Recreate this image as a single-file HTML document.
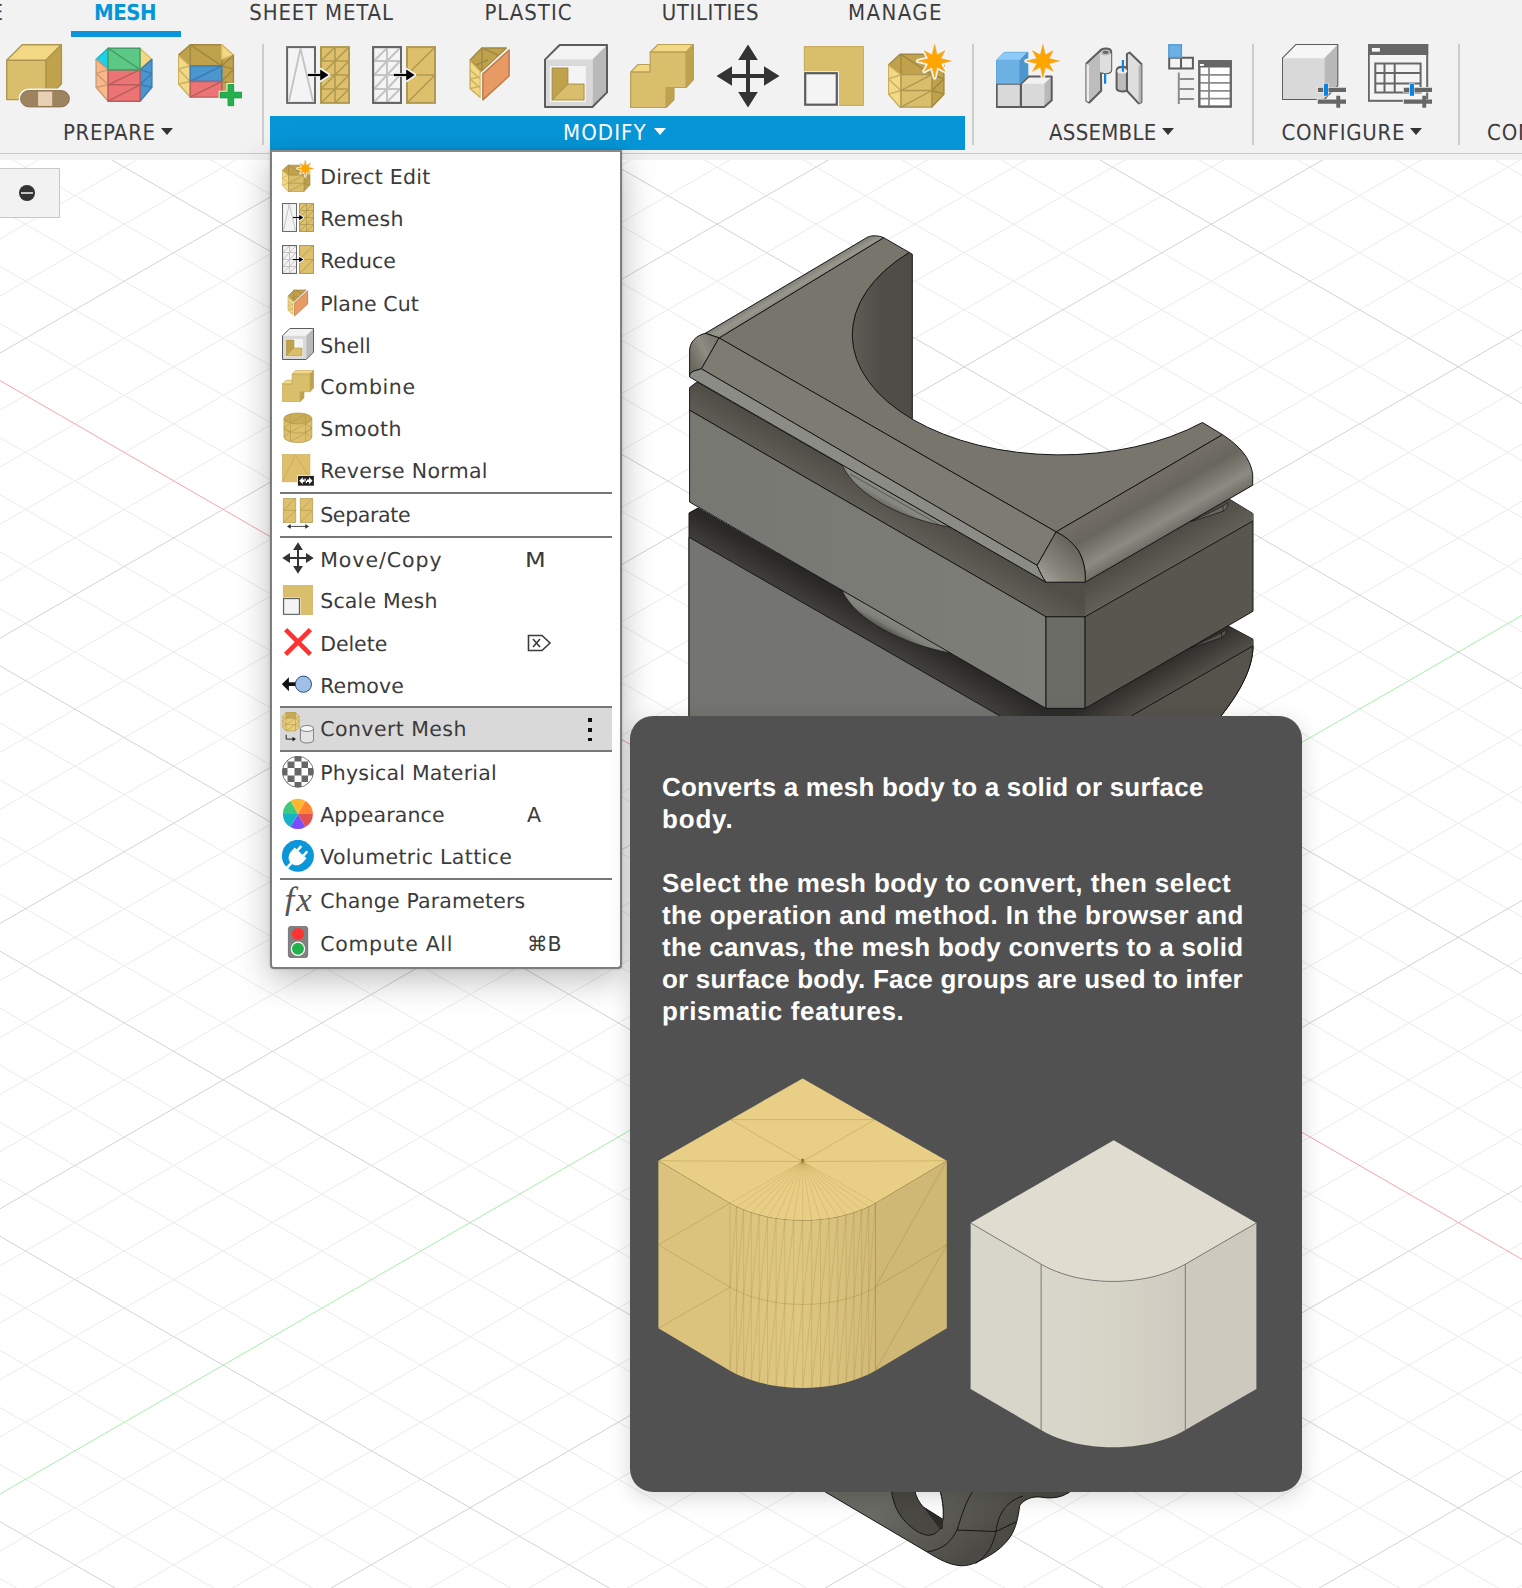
<!DOCTYPE html>
<html><head><meta charset="utf-8"><title>Mesh Modify menu</title>
<style>
html,body{margin:0;padding:0;}
body{text-rendering:geometricPrecision;width:1522px;height:1588px;overflow:hidden;position:relative;background:#fff;font-family:"Liberation Sans","DejaVu Sans",sans-serif;}
#canvas{position:absolute;left:0;top:0;}
.abs{position:absolute;}
#toolbar{opacity:.999;border-radius:0 0 1px 0;position:absolute;left:0;top:0;width:1522px;height:160px;background:#f2f2f2;}
#toolbar .line{position:absolute;left:0;top:152.5px;width:1522px;height:1.5px;background:#c9c9c9;}
.tab{position:absolute;top:-.2px;font:22px/26px "DejaVu Sans Condensed","DejaVu Sans","Liberation Sans",sans-serif;color:#3c3c3c;white-space:nowrap;}
.grp{position:absolute;top:121.4px;font:22px/26px "DejaVu Sans Condensed","DejaVu Sans","Liberation Sans",sans-serif;color:#3c3c3c;white-space:nowrap;}
.arr{position:absolute;top:128px;width:0;height:0;border-left:6.1px solid transparent;border-right:6.1px solid transparent;border-top:7.8px solid #333;}
.vsep{position:absolute;top:44px;width:2px;height:101px;background:#cdcdcd;}
.tico{position:absolute;top:44px;width:64px;height:64px;}
#menu{opacity:.999;position:absolute;left:270px;top:150px;width:348px;height:814.5px;background:#fff;border:2px solid #7d7d7d;border-top-color:#8c8886;border-radius:0 0 4px 4px;box-shadow:0 10px 34px rgba(0,0,0,.27),0 0 3px rgba(0,0,0,.18);}
.mi{position:absolute;left:47.8px;letter-spacing:.22px;font:20.5px/24px "DejaVu Sans","Liberation Sans",sans-serif;color:#3b3b3b;white-space:nowrap;}
.sc{position:absolute;left:255px;font:20.5px/24px "DejaVu Sans","Liberation Sans",sans-serif;color:#3b3b3b;white-space:nowrap;}
.msep{position:absolute;left:8px;width:332px;height:2px;background:#777;}
.mico{position:absolute;left:10px;width:32px;height:32px;}
#tooltip{opacity:.999;position:absolute;left:630px;top:716px;width:672px;height:776px;background:#515151;border-radius:23px;box-shadow:0 5px 22px rgba(0,0,0,.16);}
.tl{position:absolute;left:32px;font:bold 26px/32px "Liberation Sans",sans-serif;color:#fff;white-space:nowrap;letter-spacing:.17px;}
</style>

</head><body>
<svg width="0" height="0" style="position:absolute">
<defs>
<symbol id="i_repair" viewBox="0 0 64 64" overflow="visible">
<g stroke="#ad9650" stroke-width="1.4" stroke-linejoin="round">
<path d="M.7 16.2H40V55.6H.7Z" fill="#d9be6b"/>
<path d="M.7 16.2L16.2 .7H55.4L40 16.2Z" fill="#f3d985"/>
<path d="M40 16.2L55.4 .7V40L40 55.6Z" fill="#bfa24b"/>
</g>
<rect x="13.7" y="45.7" width="50.6" height="18.1" rx="9" fill="#9e835f" stroke="#f2f2f2" stroke-width="2.4"/>
<rect x="14.6" y="46.6" width="48.8" height="16.3" rx="8.2" fill="#9e835f" stroke="#8c7352" stroke-width="1"/>
<rect x="32.1" y="47.6" width="14.1" height="14.3" fill="#e8d0b5"/>
</symbol>
<symbol id="i_facegroups" viewBox="0 0 64 64" overflow="visible">
<g stroke-width="1.4" stroke-linejoin="round">
<path d="M16.1 4.2L4.1 15.4L16.1 25.7Z" fill="#1ad1e8" stroke="#17b5c9"/>
<path d="M48 4.2L59.9 15.4L48 25.7Z" fill="#f3d985" stroke="#d9be6b"/>
<path d="M4.1 15.4L16.1 25.7V57.2L4.1 43.3Z" fill="#f8b88a" stroke="#cf9a72"/>
<path d="M4.1 29.3L16.1 25.7M4.1 29.3L16.1 40.8M4.1 43.3L16.1 40.8" fill="none" stroke="#cf9a72"/>
<path d="M59.9 15.4L48 25.7V57.2L59.9 43.3Z" fill="#4a96cf" stroke="#3b7bb0"/>
<path d="M59.9 29.3L48 25.7M59.9 29.3L48 40.8M59.9 43.3L48 40.8" fill="none" stroke="#3b7bb0"/>
<path d="M16.1 25.7H48V57.2H16.1Z" fill="#ec7474" stroke="#b95c5c"/>
<path d="M16.1 40.8H48M16.1 40.8L48 25.7M16.1 57.2L48 40.8" fill="none" stroke="#b95c5c"/>
<path d="M16.1 4.2H48V25.7H16.1Z" fill="#5bc885" stroke="#459e68"/>
<path d="M16.1 4.2L48 25.7" fill="none" stroke="#459e68"/>
</g>
</symbol>
<symbol id="i_createfg" viewBox="0 0 64 64" overflow="visible">
<g stroke-width="1.4" stroke-linejoin="round">
<path d="M.4 11.2L12.2 .7H43.7L55.4 11.2L43.7 21.9H12.2Z" fill="#bfa24b" stroke="#a08840"/>
<path d="M12.2 .7V21.9M12.2 .7L43.7 21.9M43.7 .7V21.9" fill="none" stroke="#a08840"/>
<path d="M43.7 .7L55.4 11.2L43.7 15Z" fill="#f3d985" stroke="#d9be6b"/>
<path d="M.4 11.2L12.2 21.9V53.1L.4 40Z" fill="#f3d985" stroke="#c9b060"/>
<path d="M.4 25.2L12.2 21.9M.4 25.2L12.2 37.5M.4 40L12.2 37.5" fill="none" stroke="#c9b060"/>
<path d="M43.7 21.9L55.4 11.2V40L43.7 53.1Z" fill="#bfa24b" stroke="#a08840"/>
<path d="M55.4 25.2L43.7 21.9M55.4 25.2L43.7 37.5M55.4 40L43.7 37.5" fill="none" stroke="#a08840"/>
<path d="M12.2 21.9H43.7V37.5H12.2Z" fill="#4a96cf" stroke="#3b7bb0"/>
<path d="M12.2 37.5L43.7 21.9" fill="none" stroke="#3b7bb0"/>
<path d="M12.2 37.5H43.7V53.1H12.2Z" fill="#ec7474" stroke="#b95c5c"/>
<path d="M12.2 53.1L43.7 37.5" fill="none" stroke="#b95c5c"/>
</g>
<path d="M50 40.5H55.7V48.2H63.8V53.9H55.7V61.7H50V53.9H42.1V48.2H50Z" fill="#22b14c" stroke="#f2f2f2" stroke-width="3" paint-order="stroke"/>
<path d="M50 40.5H55.7V48.2H63.8V53.9H55.7V61.7H50V53.9H42.1V48.2H50Z" fill="#22b14c" stroke="#1c9a41" stroke-width=".8"/>
</symbol>
<symbol id="i_remesh" viewBox="0 0 64 64" overflow="visible">
<rect x="1.1" y="3.1" width="27.9" height="55.8" fill="#f4f4f4" stroke="#666" stroke-width="2"/>
<path d="M3 57L14.5 4.5L27 57" fill="none" stroke="#c4c4c4" stroke-width="1.9"/>
<rect x="35" y="3.1" width="28" height="55.8" fill="#dec06c" stroke="#b09a50" stroke-width="2"/>
<path d="M49 3V59M35 17H63M35 31H63M35 45H63M35 17L49 3M35 31L49 17M35 45L49 31M35 59L49 45M49 17L63 3M49 31L63 17M49 45L63 31M49 59L63 45" fill="none" stroke="#b09a50" stroke-width="1.6"/>
<path d="M21.9 31H36M34.2 25.4V36.6L42.6 31Z" stroke="#f2f2f2" stroke-width="3.4" fill="#f2f2f2" stroke-linejoin="round"/>
<path d="M21.9 31H36" stroke="#000" stroke-width="2.2"/><path d="M34.2 25.4V36.6L42.6 31Z" fill="#000"/>
</symbol>
<symbol id="i_reduce" viewBox="0 0 64 64" overflow="visible">
<rect x="1.1" y="3.1" width="27.9" height="55.8" fill="#f4f4f4" stroke="#666" stroke-width="2"/>
<path d="M15 4V58M2 17H28M2 31H28M2 45H28M2 17L15 4M2 31L15 17M2 45L15 31M2 58L15 45M15 17L28 4M15 31L28 17M15 45L28 31M15 58L28 45" fill="none" stroke="#c4c4c4" stroke-width="2"/>
<rect x="1.1" y="3.1" width="27.9" height="55.8" fill="none" stroke="#666" stroke-width="2"/>
<rect x="35" y="3.1" width="28" height="55.8" fill="#dec06c" stroke="#b09a50" stroke-width="2"/>
<path d="M35 31H63M35 31L63 3M35 59L63 31" fill="none" stroke="#b09a50" stroke-width="1.6"/>
<path d="M21.9 31H36M34.2 25.4V36.6L42.6 31Z" stroke="#f2f2f2" stroke-width="3.4" fill="#f2f2f2" stroke-linejoin="round"/>
<path d="M21.9 31H36" stroke="#000" stroke-width="2.2"/><path d="M34.2 25.4V36.6L42.6 31Z" fill="#000"/>
</symbol>
<symbol id="i_planecut" viewBox="0 0 64 64" overflow="visible">
<g stroke-linejoin="round" stroke-width="1.4">
<path d="M12.1 16.1L23.8 4H48.4L24.4 28Z" fill="#bfa24b" stroke="#a08840"/>
<path d="M24 4V27M24 4L40 11M18 21L30 16M24 27L36 16" fill="none" stroke="#a08840"/>
<path d="M12.1 16.7L22.4 27.3V53.5L12.1 44.6Z" fill="#f3d985" stroke="#c9b060"/>
<path d="M12.1 26L22.4 35M12.1 35L22.4 33M12.1 35L22.4 44M12.1 44.6L22.4 42" fill="none" stroke="#c9b060"/>
<path d="M24.4 29.5L51.7 4.7V32.3L24.4 57.2Z" fill="#e89a64" stroke="#f4f4f4" stroke-width="3.6"/>
<path d="M24.9 29.8L51.1 6V32L24.9 55.8Z" fill="#e89a64" stroke="#c07d4e" stroke-width="1.6"/>
</g>
</symbol>
<symbol id="i_shell" viewBox="0 0 64 64" overflow="visible">
<g stroke-linejoin="round">
<path d="M1 15.6L15.6 1H63V48.4L48.4 63H1Z" fill="#f3f3f3" stroke="none"/>
<path d="M48.4 15.6L63 1V48.4L48.4 63Z" fill="#b9b9b9"/>
<path d="M1 15.6H48.4V63H1Z" fill="#d9d9d9"/>
<path d="M5.9 21.9H41.9V58H5.9Z" fill="#f4f4f4"/>
<path d="M8.2 24.1H23.8V40.1L8.2 55.8Z" fill="#bfa24b" stroke="#a89045" stroke-width="1.2"/>
<path d="M8.2 55.8L23.8 40.1H40V55.8Z" fill="#d9be6b" stroke="#b09a50" stroke-width="1.2"/>
<path d="M1 15.6L15.6 1H63V48.4L48.4 63H1Z" fill="none" stroke="#5c5c5c" stroke-width="2"/>
</g>
</symbol>
<symbol id="i_combine" viewBox="0 0 64 64" overflow="visible">
<g stroke="#b8a055" stroke-width="1.2" stroke-linejoin="round">
<path d="M.6 28.2L8.1 20.5H20.2V28.2Z" fill="#f3d985"/>
<path d="M20.2 8.1L28 .5H63.5L56.1 8.1Z" fill="#f3d985"/>
<path d="M56.1 8.1L63.5 .5V35.7L56.1 43.5Z" fill="#bfa24b"/>
<path d="M36.1 43.5H44V55.8L36.1 63.5Z" fill="#bfa24b"/>
<path d="M.6 28.2H20.2V8.1H56.1V43.5H36.1V63.5H.6Z" fill="#d9be6b"/>
</g>
</symbol>
<symbol id="i_move" viewBox="0 0 64 64" overflow="visible">
<path d="M32 .5L41.8 16H34V30H48V22.2L63.5 32L48 41.8V34H34V48H41.8L32 63.6L22.2 48H30V34H16V41.8L.5 32L16 22.2V30H30V16H22.2Z" fill="#333"/>
</symbol>
<symbol id="i_scale" viewBox="0 0 64 64" overflow="visible">
<rect x="2.4" y="2.6" width="59" height="58.8" fill="#d9be6b" stroke="#c9ae5e" stroke-width="1.2"/>
<path d="M32 2.6L61.4 32M2.4 2.6L32 32" stroke="#cdb262" stroke-width="1" fill="none" opacity="0"/>
<rect x="1.2" y="27.2" width="35.8" height="35.6" fill="#f4f4f4"/>
<rect x="3.2" y="29.2" width="31.6" height="31.5" fill="#f4f4f4" stroke="#5c5c5c" stroke-width="2.2"/>
</symbol>
<symbol id="i_star" viewBox="-17 -17 34 34" overflow="visible">
<path id="starp" d="M0.0 -16.6L2.5 -6.1L10.3 -10.3L6.1 -2.5L16.6 0.0L6.1 2.5L10.3 10.3L2.5 6.1L0.0 16.6L-2.5 6.1L-10.3 10.3L-6.1 2.5L-16.6 0.0L-6.1 -2.5L-10.3 -10.3L-2.5 -6.1Z"/>
</symbol>
<symbol id="i_directedit" viewBox="0 0 64 64" overflow="visible">
<g stroke-linejoin="round" stroke-width="1.4">
<path d="M.4 21.1L12 10.3H43.8L55.9 21.1L43.8 30.6H13Z" fill="#bfa24b" stroke="#a08840"/>
<path d="M13 10.3V30.6M13 10.3L43.8 30.6" fill="none" stroke="#a08840"/>
<path d="M.4 21.1L13 30.6V63.1L12 63.3L.4 50.2Z" fill="#f3d985" stroke="#c9b060"/>
<path d="M.4 35L13 30.6M.4 35L13 46.5M.4 50.2L13 46.5" fill="none" stroke="#c9b060"/>
<path d="M43.8 30.6L55.9 21.1V50.2L43.8 63.1Z" fill="#bfa24b" stroke="#a08840"/>
<path d="M55.9 35L43.8 30.6M55.9 35L43.8 46.5M55.9 50.2L43.8 46.5" fill="none" stroke="#a08840"/>
<path d="M13 30.6H43.8V63.1H13Z" fill="#d9be6b" stroke="#ad9650"/>
<path d="M13 46.5H43.8M13 46.5L43.8 30.6M13 63.1L43.8 46.5" fill="none" stroke="#ad9650"/>
</g>
<g transform="translate(46.6 17)"><use href="#starp" fill="#f4f4f4" stroke="#f4f4f4" stroke-width="4" stroke-linejoin="round"/><use href="#starp" fill="#ffa500" stroke="#f0a020" stroke-width=".6"/></g>
</symbol>
<symbol id="i_newcomp" viewBox="0 0 64 64" overflow="visible">
<g stroke-linejoin="round">
<path d="M.7 39.8H24.8V63H.7Z" fill="#d9d9d9" stroke="#5c5c5c" stroke-width="2"/>
<path d="M25 39.8L32.6 32.6H55.7L48.2 39.8Z" fill="#f1f1f1"/>
<path d="M48.2 39.8L55.7 32.6V56.3L48.2 63Z" fill="#b9b9b9"/>
<path d="M25 39.8H48.2V63H25Z" fill="#d9d9d9"/>
<path d="M25 39.8L32.6 32.6H55.7V56.3L48.2 63H25Z" fill="none" stroke="#5c5c5c" stroke-width="2"/>
<path d="M.4 16.3H24.2V39.6H.4Z" fill="#6cb0e4" stroke="#5a9fd6" stroke-width="1"/>
<path d="M.4 16.3L8.2 8.3H31.8L24.2 16.3Z" fill="#8ecaf8" stroke="#6cb0e4" stroke-width="1"/>
<path d="M24.2 16.3L31.8 8.3V32L24.2 39.6Z" fill="#4a96cf" stroke="#4a8fc4" stroke-width="1"/>
</g>
<g transform="translate(46.9 17)"><use href="#starp" fill="#f4f4f4" stroke="#f4f4f4" stroke-width="4" stroke-linejoin="round"/><use href="#starp" fill="#ffa500" stroke="#f0a020" stroke-width=".6"/></g>
</symbol>
<symbol id="i_joint" viewBox="0 0 64 64" overflow="visible">
<g stroke="#5c5c5c" stroke-width="2" stroke-linejoin="round">
<path d="M4.4 19.5L18 6.8C19 5.4 21 4.6 23.5 4.6C27 4.6 29.2 6 29.2 8V26C29.2 28 27 29.2 23.5 29.2C21.5 29.2 19.8 28.8 19 28L19.2 46.8L7.4 58.5L4.4 56.9Z" fill="#bdbdbd"/>
<path d="M18 8V28C19 28.8 21 29.2 23.5 29.2C27 29.2 29.2 28 29.2 26V8C29.2 10 27 11.4 23.5 11.4C20 11.4 18 10 18 8Z" fill="#dedede" stroke="none"/>
<path d="M4.4 19.5L7 21.5V58L4.4 56.9Z" fill="#ececec" stroke="none"/>
<ellipse cx="23.6" cy="8.3" rx="3" ry="1.6" fill="#666" stroke="none"/>
<path d="M44.9 10L47.6 8.5L59.4 20V58L56.6 59.4L44.9 46.8Z" fill="#dedede"/>
<path d="M56.6 22V59.4L59.4 58V20Z" fill="#b5b5b5" stroke="none"/>
<path d="M34.6 27C34.6 24.5 37 22.8 40.5 22.8C43 22.8 44.9 23.6 44.9 24.5V46.8C43.5 47.2 42 47.4 40.5 47.4C37 47.4 34.6 46 34.6 44Z" fill="#bdbdbd"/>
<ellipse cx="40.2" cy="27" rx="5" ry="2.6" fill="#ececec" stroke="none"/>
</g>
<path d="M23.1 30.1V39.8M40.9 16V27.8" stroke="#0a84e0" stroke-width="2.2" fill="none"/>
</symbol>
<symbol id="i_bom" viewBox="0 0 64 64" overflow="visible">
<path d="M1.2 13.8H24.9V24.6H1.2ZM13 13.8V24.6" fill="#f4f4f4" stroke="#5c5c5c" stroke-width="2"/>
<rect x=".8" y=".8" width="12.6" height="12.6" fill="#6cb0e4" stroke="#4f9bd4" stroke-width="1.4"/>
<path d="M10.8 28.4V60M10.8 34.9H26M10.8 44.9H26M10.8 54.9H26" fill="none" stroke="#8c8c8c" stroke-width="2"/>
<rect x="31.3" y="17.3" width="31.5" height="45.3" fill="#fff" stroke="#666" stroke-width="2"/>
<rect x="30.3" y="16.3" width="33.5" height="7.2" fill="#666"/>
<path d="M41 23V63M31 30.8H63M31 38.8H63M31 46.8H63M31 54.6H63" fill="none" stroke="#8c8c8c" stroke-width="1.8"/>
<rect x="31.3" y="17.3" width="31.5" height="45.3" fill="none" stroke="#666" stroke-width="2"/>
<rect x="31.9" y="20" width="4" height="1.9" fill="#fff"/>
</symbol>
<symbol id="i_sliders" viewBox="0 0 64 64" overflow="visible">
<path d="M34.8 43H65V48.6H34.8ZM34.8 54.9H65V60.5H34.8Z" fill="#f2f2f2"/>
<path d="M35.8 43.7H64V47.9H35.8ZM35.8 55.6H64V59.8H35.8ZM54.3 51.8H58.2V63.8H54.3Z" fill="#666"/>
<rect x="41.2" y="39.2" width="5.3" height="13.1" fill="#f2f2f2"/>
<rect x="41.9" y="39.7" width="4.1" height="12.1" fill="#0a84e0"/>
</symbol>
<symbol id="i_cfgcube" viewBox="0 0 64 64" overflow="visible">
<g stroke-linejoin="round">
<path d="M.4 14.2L14 .4H55.8L42.3 14.2Z" fill="#f6f6f6"/>
<path d="M42.3 14.2L55.8 .4V41.6L42.3 55.5Z" fill="#b9b9b9"/>
<path d="M.4 14.2H42.3V55.5H.4Z" fill="#d9d9d9"/>
<path d="M.4 14.2L14 .4H55.8V41.6L42.3 55.5H.4Z" fill="none" stroke="#5c5c5c" stroke-width="1.1"/>
</g>
<use href="#i_sliders" width="64" height="64"/>
</symbol>
<symbol id="i_cfgtable" viewBox="0 0 64 64" overflow="visible">
<rect x=".8" y="1" width="58.4" height="55.8" fill="#f4f4f4" stroke="#666" stroke-width="2"/>
<rect x="-.2" y="0" width="60.4" height="11" fill="#666"/>
<rect x="3.9" y="4" width="8" height="3.7" fill="#f4f4f4"/>
<path d="M7.3 19.4H52.6V48.6H7.3ZM16.5 19V49M26.7 19V49M7 29H53M7 39.4H53" fill="none" stroke="#666" stroke-width="2"/>
<use href="#i_sliders" width="64" height="64"/>
</symbol>
<symbol id="i_smooth" viewBox="0 0 64 64" overflow="visible">
<path d="M4 13V50A27.8 11 0 0 0 59.6 50V13Z" fill="#dec06c" stroke="#b09a50" stroke-width="1.6"/>
<ellipse cx="31.8" cy="13" rx="27.8" ry="11" fill="#c9ac55" stroke="#b09a50" stroke-width="1.6"/>
<path d="M4 31A27.8 11 0 0 0 59.6 31M17 22.6V59M47 22.6V59M17 4V22.6M47 4V22.6M17 22.6L47 4M4 31L17 22.6M4 50L17 40M17 40L47 24M17 59L47 42M47 24L59.6 13M47 42L59.6 31M47 24L59.6 31M47 42L59.6 50M4 13L17 22.6M4 31L17 40" fill="none" stroke="#b09a50" stroke-width="1.3"/>
</symbol>
<symbol id="i_reverse" viewBox="0 0 64 64" overflow="visible">
<rect x=".8" y="1" width="55" height="54.6" fill="#dec06c" stroke="#c9ae5e" stroke-width="1.4"/>
<path d="M1 55L27 2L52 42" fill="none" stroke="#c0a555" stroke-width="1.3"/>
<rect x="30.4" y="42.4" width="34.6" height="22.4" fill="#fff"/>
<rect x="31.8" y="43.8" width="32" height="19.6" fill="#222"/>
<path d="M34.5 53.6L41.5 46.5V51H54V46.5L61 53.6L54 60.6V56.2H41.5V60.6Z" fill="#fff"/>
<path d="M45 49H50V58H45Z" fill="#222"/><path d="M45 49H47.5V53.5H45ZM47.5 53.5H50V58H47.5Z" fill="#fff"/>
</symbol>
<symbol id="i_separate" viewBox="0 0 64 64" overflow="visible">
<path d="M2.8 .6H27.4V49H2.8ZM36.6 .6H61.2V49H36.6Z" fill="#dec06c" stroke="#b09a50" stroke-width="1.5"/>
<path d="M2.8 24.6H27.4M36.6 24.6H61.2M2.8 24.6L27.4 .6M2.8 49L27.4 24.6M36.6 24.6L61.2 .6M36.6 49L61.2 24.6" fill="none" stroke="#b09a50" stroke-width="1.3"/>
<path d="M12 56.8H52" stroke="#333" stroke-width="1.8"/><path d="M10 56.8L17.5 52V61.6ZM54 56.8L46.5 52V61.6Z" fill="#333"/>
</symbol>
<symbol id="i_delete" viewBox="0 0 64 64" overflow="visible">
<path d="M7.2 7.2L56.8 56.8M56.8 7.2L7.2 56.8" stroke="#ff3232" stroke-width="9.2" fill="none"/>
</symbol>
<symbol id="i_remove" viewBox="0 0 64 64" overflow="visible">
<path d="M-.2 32.4L13.8 18.4V28.7H28V36.1H13.8V46.4Z" fill="#111"/>
<circle cx="42.8" cy="32.4" r="16.2" fill="#9fbfe6" stroke="#1c3a6e" stroke-width="1.8"/>
</symbol>
<symbol id="i_convert" viewBox="0 0 64 64" overflow="visible">
<g stroke-width="1.2" stroke-linejoin="round">
<path d="M.6 9L8 .6H27L34.4 9V30L27 37.8H8L.6 30Z" fill="#e8ce7c" stroke="#b09a50"/>
<path d="M8 .6H27V12.5H8Z" fill="#c9ac55" stroke="#b09a50"/>
<path d="M8 12.5V37.8M27 12.5V37.8M8 25H27M8 12.5L27 .6M8 25L27 12.5M8 37.8L27 25M.6 9L8 12.5M.6 19L8 25M.6 30L8 25M34.4 9L27 12.5M34.4 19L27 25M34.4 30L27 25M.6 19L8 12.5M34.4 19L27 12.5" fill="none" stroke="#b09a50"/>
</g>
<path d="M36.8 33V56A13.2 6 0 0 0 63.2 56V33Z" fill="#e4e4e4" stroke="#555" stroke-width="1.4"/>
<ellipse cx="50" cy="33" rx="13.2" ry="6" fill="#f6f6f6" stroke="#555" stroke-width="1.4"/>
<path d="M8.4 45.6V54.2H24" fill="none" stroke="#222" stroke-width="2"/><path d="M21 49.6L28 54.2L21 58.8Z" fill="#222"/>
</symbol>
<symbol id="i_physmat" viewBox="0 0 64 64" overflow="visible">
<clipPath id="cpm"><circle cx="31.8" cy="31.6" r="31"/></clipPath>
<circle cx="31.8" cy="31.6" r="31" fill="#fff"/>
<g clip-path="url(#cpm)" fill="#666">
<path d="M25 -1H39V11H25ZM11 11H25V24H11ZM39 11H52V24H39ZM-1 24H11V39H-1ZM25 24H39V39H25ZM52 24H64V39H52ZM11 39H25V52H11ZM39 39H52V52H39ZM25 52H39V64H25ZM0 5L11 11V0ZM52 0V11L64 5ZM0 58L11 52V64ZM52 52V64H64Z"/>
</g>
<circle cx="31.8" cy="31.6" r="31" fill="none" stroke="#5a5a5a" stroke-width="1.6"/>
</symbol>
<symbol id="i_appearance" viewBox="0 0 64 64" overflow="visible">
<g transform="translate(31.8 31.8)">
<path d="M0 0L-15 -25.98A30 30 0 0 1 15 -25.98Z" fill="#fdb731"/>
<path d="M0 0L15 -25.98A30 30 0 0 1 30 0Z" fill="#ff8533"/>
<path d="M0 0L30 0A30 30 0 0 1 15 25.98Z" fill="#e0524f"/>
<path d="M0 0L15 25.98A30 30 0 0 1 -15 25.98Z" fill="#7c4dff"/>
<path d="M0 0L-15 25.98A30 30 0 0 1 -30 0Z" fill="#14b4c6"/>
<path d="M0 0L-30 0A30 30 0 0 1 -15 -25.98Z" fill="#3fc97d"/>
</g>
</symbol>
<symbol id="i_lattice" viewBox="0 0 64 64" overflow="visible">
<circle cx="31.8" cy="31.6" r="32" fill="#0a96d8"/>
<g transform="translate(31.8 31.6) rotate(42)" fill="#fff">
<path d="M-16 -8H16V2C16 13 9 20 0 20C-9 20 -16 13 -16 2Z"/>
<rect x="-10.5" y="-19" width="5" height="13"/>
<rect x="5.5" y="-19" width="5" height="13"/>
<rect x="-2.6" y="18" width="5.2" height="16"/>
</g>
</symbol>
<symbol id="i_fx" viewBox="0 0 64 64" overflow="visible">
<text x="5" y="54.2" font-family="'Liberation Serif','DejaVu Serif',serif" font-style="italic" font-size="70" fill="#555" letter-spacing="4">fx</text>
</symbol>
<symbol id="i_compute" viewBox="0 0 64 64" overflow="visible">
<rect x="12.8" y=".4" width="38.6" height="63.2" rx="6" fill="#818181" stroke="#666" stroke-width="1.6"/>
<circle cx="31.9" cy="16.2" r="12.2" fill="#ff3333"/>
<circle cx="31.9" cy="45.6" r="14.4" fill="#fff"/>
<circle cx="31.9" cy="45.6" r="12" fill="#22b14c"/>
</symbol>
</defs>
</svg>

<svg id="canvas" width="1522" height="1588" viewBox="0 0 1522 1588">
<rect width="1522" height="1588" fill="#fff"/>
<path d="M0 181.9L1522 -696.9M0 238.9L1522 -639.8M0 296.0L1522 -582.8M0 -703.4L1522 175.4M0 410.0L1522 -468.7M0 -646.3L1522 232.4M0 467.1L1522 -411.6M0 -589.2L1522 289.5M0 524.2L1522 -354.6M0 -532.2L1522 346.5M0 581.2L1522 -297.5M0 -418.1L1522 460.6M0 695.3L1522 -183.4M0 -361.0L1522 517.7M0 752.4L1522 -126.4M0 -304.0L1522 574.7M0 809.4L1522 -69.3M0 -246.9L1522 631.8M0 866.5L1522 -12.3M0 -132.8L1522 745.9M0 980.6L1522 101.8M0 -75.8L1522 802.9M0 1037.6L1522 158.9M0 -18.7L1522 860.0M0 1094.7L1522 215.9M0 38.3L1522 917.0M0 1151.7L1522 273.0M0 152.4L1522 1031.1M0 1265.8L1522 387.1M0 209.5L1522 1088.2M0 1322.8L1522 444.1M0 266.5L1522 1145.2M0 1379.9L1522 501.2M0 323.6L1522 1202.3M0 1437.0L1522 558.2M0 437.7L1522 1316.4M0 1551.0L1522 672.3M0 494.7L1522 1373.4M0 1608.1L1522 729.4M0 551.8L1522 1430.5M0 1665.2L1522 786.4M0 608.8L1522 1487.5M0 1722.2L1522 843.5M0 722.9L1522 1601.6M0 1836.3L1522 957.6M0 780.0L1522 1658.7M0 1893.3L1522 1014.6M0 837.0L1522 1715.7M0 1950.4L1522 1071.7M0 894.0L1522 1772.8M0 2007.4L1522 1128.7M0 1008.1L1522 1886.9M0 2121.6L1522 1242.8M0 1065.2L1522 1943.9M0 2178.6L1522 1299.9M0 1122.2L1522 2001.0M0 2235.7L1522 1356.9M0 1179.3L1522 2058.0M0 2292.7L1522 1414.0M0 1293.4L1522 2172.1M0 2406.8L1522 1528.1M0 1350.4L1522 2229.2M0 2463.8L1522 1585.1M0 1407.5L1522 2286.2M0 1464.6L1522 2343.3M0 1578.7L1522 2457.4" stroke="#ebebeb" stroke-width="1" fill="none"/><path d="M0 353.0L1522 -525.7M0 -475.1L1522 403.6M0 638.2L1522 -240.5M0 -189.9L1522 688.8M0 923.5L1522 44.8M0 95.4L1522 974.1M0 1208.8L1522 330.0M0 665.9L1522 1544.6M0 1779.2L1522 900.5M0 951.1L1522 1829.8M0 2064.5L1522 1185.8M0 1236.3L1522 2115.1M0 2349.8L1522 1471.0M0 1521.6L1522 2400.3" stroke="#d2d2d2" stroke-width="1" fill="none"/><path d="M0 380.6L1522 1259.3" stroke="#f4a6a6" stroke-width="1" fill="none"/><path d="M0 1494.0L1522 615.3" stroke="#a6f0a6" stroke-width="1" fill="none"/>
<defs>
<linearGradient id="gFilL" gradientUnits="userSpaceOnUse" x1="790" y1="280" x2="800" y2="297"><stop offset="0" stop-color="#77756c"/><stop offset=".45" stop-color="#98978e"/><stop offset="1" stop-color="#79766d"/></linearGradient>
<linearGradient id="gFilR" gradientUnits="userSpaceOnUse" x1="1140" y1="483" x2="1170" y2="535"><stop offset="0" stop-color="#736f66"/><stop offset=".35" stop-color="#69665d"/><stop offset=".75" stop-color="#8b8b84"/><stop offset="1" stop-color="#6d6a62"/></linearGradient>
<linearGradient id="gWall" gradientUnits="userSpaceOnUse" x1="852" y1="0" x2="912" y2="0"><stop offset="0" stop-color="#5f5d55"/><stop offset=".45" stop-color="#504e48"/><stop offset="1" stop-color="#4e4c46"/></linearGradient>
<linearGradient id="gMidTop" gradientUnits="userSpaceOnUse" x1="860" y1="478" x2="842" y2="510"><stop offset="0" stop-color="#514e48"/><stop offset="1" stop-color="#66635b"/></linearGradient>
<linearGradient id="gMidTopR" gradientUnits="userSpaceOnUse" x1="1160" y1="540" x2="1176" y2="568"><stop offset="0" stop-color="#4f4c46"/><stop offset="1" stop-color="#65625a"/></linearGradient>
<linearGradient id="gBand" gradientUnits="userSpaceOnUse" x1="850" y1="600" x2="836" y2="625"><stop offset="0" stop-color="#2b2927"/><stop offset="1" stop-color="#44423e"/></linearGradient>
<linearGradient id="gLowTopR" gradientUnits="userSpaceOnUse" x1="1150" y1="670" x2="1166" y2="698"><stop offset="0" stop-color="#2f2d2a"/><stop offset="1" stop-color="#55524b"/></linearGradient>
<linearGradient id="gCone" gradientUnits="userSpaceOnUse" x1="1047" y1="582" x2="1078" y2="548"><stop offset="0" stop-color="#a09e94"/><stop offset=".35" stop-color="#87857b"/><stop offset="1" stop-color="#66635b"/></linearGradient>
<linearGradient id="gConeL" gradientUnits="userSpaceOnUse" x1="690" y1="360" x2="720" y2="345"><stop offset="0" stop-color="#6b685f"/><stop offset=".5" stop-color="#8d8b82"/><stop offset="1" stop-color="#79766d"/></linearGradient>
<linearGradient id="gFront" gradientUnits="userSpaceOnUse" x1="689" y1="0" x2="1046" y2="0"><stop offset="0" stop-color="#777872"/><stop offset="1" stop-color="#7d7e78"/></linearGradient>
<linearGradient id="gRing" gradientUnits="userSpaceOnUse" x1="900" y1="1492" x2="960" y2="1566"><stop offset="0" stop-color="#6a6b65"/><stop offset="1" stop-color="#4c4a44"/></linearGradient>
<linearGradient id="gLens1" gradientUnits="userSpaceOnUse" x1="900" y1="494" x2="890" y2="512"><stop offset="0" stop-color="#8c8d87"/><stop offset=".55" stop-color="#85867f"/><stop offset="1" stop-color="#5d5b54"/></linearGradient>
<linearGradient id="gLens2" gradientUnits="userSpaceOnUse" x1="900" y1="620" x2="890" y2="638"><stop offset="0" stop-color="#8e8f89"/><stop offset=".5" stop-color="#7d7e78"/><stop offset="1" stop-color="#3a3835"/></linearGradient>
</defs>
<g stroke="#161616" stroke-width="1" stroke-linejoin="round">
<!-- lower body -->
<path d="M689 513L698 508L1046 708.4H1085.1L1228 625.8L1253 639.2V646C1253 668 1240 692 1221 716L1200 760H689Z" fill="url(#gBand)"/>
<path d="M1085.1 708.4L1228 625.8L1253 639.2V645.9L1131.9 715.6L1100 760H1046V708.4Z" fill="url(#gLowTopR)" stroke="none"/>
<path d="M1253 645.9L1131.9 715.6V760H1200L1221 716C1240 692 1253 668 1253 645.9Z" fill="#56534c"/>
<path d="M689 537.2L1000 716L1080 762H689Z" fill="#747570"/>
<!-- mid body -->
<path d="M689.6 387.6L697 382L1046 582.2H1085.1L1229.5 499.2L1253 513.6V520.9L1085.1 616.8H1046L689.6 410.2Z" fill="url(#gMidTop)"/>
<path d="M1085.1 582.2L1229.5 499.2L1253 513.6V520.9L1085.1 616.8Z" fill="url(#gMidTopR)" stroke="none"/><path d="M1191 521.5C1205 515 1218 509 1223 506L1227.8 503C1228 507 1226 510 1222 511.5C1212 515 1200 519 1191 521.5ZM1223 506V511" fill="#6a675f" stroke-width=".7"/><path transform="translate(-1.5 126.6)" d="M1191 521.5C1205 515 1218 509 1223 506L1227.8 503C1228 507 1226 510 1222 511.5C1212 515 1200 519 1191 521.5ZM1223 506V511" fill="#55524b" stroke-width=".7"/>
<path d="M689.6 410.2L1046 616.8V708.4L689.6 502Z" fill="url(#gFront)"/>
<path d="M1046 616.8H1085.1V708.4H1046Z" fill="#6c6c66"/>
<path d="M1085.1 616.8L1253 520.9V611.3L1085.1 708.4Z" fill="#59564f"/>
<!-- lens shadows -->
<path d="M842.1 464.8C856 496 903 519 950.4 527.2Z" fill="url(#gLens1)" stroke-width=".7"/><path d="M850 474L945 528" stroke-width=".6" fill="none" stroke="#3a3835"/>
<path d="M842.1 590.5C856 621 903 644 950.4 653Z" fill="url(#gLens2)" stroke-width=".7"/>
<!-- top piece -->
<path d="M909.2 252.4L912.3 254.2V419.5A208 120 0 0 1 909.2 252.4Z" fill="url(#gWall)"/>
<path d="M883.7 237.7L909.2 252.4A208 120 0 0 0 1202.4 422.5L1203.5 423.1L1222.5 434.7L1056.1 531.9L719.1 337.9Z" fill="#78756d"/>
<path d="M865 238.7C868 236.5 871 235.8 873.9 235.8C878 235.8 881 236.5 883.7 237.7L719.1 337.9L705.3 333.3Z" fill="url(#gFilL)"/>
<path d="M705.3 333.3L719.1 337.9L701.4 368.8L694 371C691 372 689.6 374 689.6 375.7V350.1C690 342 696 335.5 705.3 333.3Z" fill="url(#gConeL)"/>
<path d="M719.1 337.9L1056.1 531.9L1037.1 565.4L701.4 368.8Z" fill="#7e7b72"/>
<path d="M701.4 368.8L1037.1 565.4C1040 572 1043 578 1046 582.2L689.6 377C689.6 374 691 372 694 371Z" fill="#8b8c86"/>
<path d="M1056.1 531.9L1222.5 434.7C1240 446 1250 458 1252.7 473.8V485.2L1085.1 582.2C1086 572 1084 560 1078 550C1072 542 1065 536 1056.1 531.9Z" fill="url(#gFilR)"/>
<path d="M1056.1 531.9C1065 536 1072 542 1078 550C1084 560 1086 572 1085.1 582.2H1046C1043 578 1040 572 1037.1 565.4Z" fill="url(#gCone)"/>
<!-- bottom ring piece -->
<path d="M822 1490L927.2 1552C940 1560 950 1565 960.8 1565.7C968 1566 975.5 1563.6 985 1558C996.6 1552 1005 1545 1011.3 1535.2C1016 1527 1018 1518.4 1019.7 1505.7C1024 1499 1032.3 1496.3 1040 1497C1053.3 1499.4 1064 1497 1072.3 1490Z" fill="url(#gRing)"/>
<path d="M891.4 1490C893 1505 899 1515 906.2 1522.6C914 1530 920 1534 927.2 1535.2C933 1535.5 937 1533 939.8 1528.9C942 1525 943 1521 943 1518.4C944 1508 942 1498 939.8 1490Z" fill="#4a4843"/>
<path d="M914.6 1490C916 1497 919 1502 923 1506.8L943 1519.4C944 1508 942 1498 939.8 1490Z" fill="#fff"/>
<path d="M923 1506.8L943 1519.4V1529L939.8 1528.9Z" fill="#2c2b28" stroke="none"/>
<path d="M927.2 1552C945 1549 952 1540 957 1530C962 1515 966 1500 974 1490M957 1530L996 1531.5L1016 1522M996 1531.5C993 1545 988 1555 975.5 1563.6M996 1531.5C998 1515 1005 1502 1023 1496" fill="none"/>
</g>

</svg>
<div id="toolbar">
<div class="line"></div>
<span class="tab" style="left:-9.5px;top:.5px">E</span>
<span class="tab" id="t_mesh" style="left:94.10px;top:0.5px;letter-spacing:-0.500px;color:#0696d7;font-weight:bold;">MESH</span>
<div class="abs" style="left:71px;top:31px;width:110px;height:6px;background:#0a96d8"></div>
<span class="tab" id="t_sheet" style="left:249.30px;top:0.5px;letter-spacing:0.830px;">SHEET METAL</span>
<span class="tab" id="t_plastic" style="left:484.40px;top:0.5px;letter-spacing:0.967px;">PLASTIC</span>
<span class="tab" id="t_util" style="left:661.80px;top:0.5px;letter-spacing:0.575px;">UTILITIES</span>
<span class="tab" id="t_manage" style="left:848.00px;top:0.5px;letter-spacing:1.440px;">MANAGE</span>

<div class="vsep" style="left:261.5px"></div>
<div class="vsep" style="left:972px"></div>
<div class="vsep" style="left:1251.5px"></div>
<div class="vsep" style="left:1457.5px"></div>

<div class="abs" style="left:270px;top:116px;width:694.5px;height:34px;background:#0696d7"></div>

<span class="grp" id="g_prepare" style="left:63.00px;top:121.4px;letter-spacing:0.600px;">PREPARE</span><div class="arr" style="left:160.5px"></div>
<span class="grp" id="g_modify" style="left:563.00px;top:121.4px;letter-spacing:1.080px;color:#fff;">MODIFY</span><div class="arr" style="left:654.4px;border-top-color:#fff"></div>
<span class="grp" id="g_assemble" style="left:1049.00px;top:121.4px;letter-spacing:0.271px;">ASSEMBLE</span><div class="arr" style="left:1162px"></div>
<span class="grp" id="g_configure" style="left:1281.40px;top:121.4px;letter-spacing:0.699px;">CONFIGURE</span><div class="arr" style="left:1410px"></div>
<span class="grp" id="g_co" style="left:1487px;letter-spacing:.8px">CONSTRUCT</span>

<svg class="tico" style="left:6px" viewBox="0 0 64 64"><use href="#i_repair"/></svg>
<svg class="tico" style="left:92px" viewBox="0 0 64 64"><use href="#i_facegroups"/></svg>
<svg class="tico" style="left:178px" viewBox="0 0 64 64"><use href="#i_createfg"/></svg>
<svg class="tico" style="left:286px" viewBox="0 0 64 64"><use href="#i_remesh"/></svg>
<svg class="tico" style="left:372px" viewBox="0 0 64 64"><use href="#i_reduce"/></svg>
<svg class="tico" style="left:458px" viewBox="0 0 64 64"><use href="#i_planecut"/></svg>
<svg class="tico" style="left:544px" viewBox="0 0 64 64"><use href="#i_shell"/></svg>
<svg class="tico" style="left:630px" viewBox="0 0 64 64"><use href="#i_combine"/></svg>
<svg class="tico" style="left:716px" viewBox="0 0 64 64"><use href="#i_move"/></svg>
<svg class="tico" style="left:802px" viewBox="0 0 64 64"><use href="#i_scale"/></svg>
<svg class="tico" style="left:888px" viewBox="0 0 64 64"><use href="#i_directedit"/></svg>
<svg class="tico" style="left:996px" viewBox="0 0 64 64"><use href="#i_newcomp"/></svg>
<svg class="tico" style="left:1082px" viewBox="0 0 64 64"><use href="#i_joint"/></svg>
<svg class="tico" style="left:1168px" viewBox="0 0 64 64"><use href="#i_bom"/></svg>
<svg class="tico" style="left:1282px" viewBox="0 0 64 64"><use href="#i_cfgcube"/></svg>
<svg class="tico" style="left:1368px" viewBox="0 0 64 64"><use href="#i_cfgtable"/></svg>
</div>
<div class="abs" style="left:-2px;top:168px;width:59.5px;height:47.5px;background:#f2f2f2;border:1.6px solid #c8c8c8;"></div>
<div class="abs" style="left:19.3px;top:185.2px;width:15.8px;height:15.8px;border-radius:50%;background:#333"></div>
<div class="abs" style="left:21px;top:192px;width:12px;height:2.2px;background:#c4c4c4"></div>

<div id="menu">
<svg class="mico" style="top:8.0px" viewBox="0 0 64 64"><use href="#i_directedit"/></svg>
<span class="mi" id="m0" style="left:48.20px;top:13.3px;letter-spacing:0.240px;">Direct Edit</span>
<svg class="mico" style="top:50.1px" viewBox="0 0 64 64"><use href="#i_remesh"/></svg>
<span class="mi" id="m1" style="left:48.20px;top:55.4px;letter-spacing:0.220px;">Remesh</span>
<svg class="mico" style="top:92.1px" viewBox="0 0 64 64"><use href="#i_reduce"/></svg>
<span class="mi" id="m2" style="left:48.20px;top:97.4px;letter-spacing:-0.020px;">Reduce</span>
<svg class="mico" style="top:136.0px" viewBox="0 0 64 64"><use href="#i_planecut"/></svg>
<span class="mi" id="m3" style="left:48.20px;top:139.5px;letter-spacing:0.057px;">Plane Cut</span>
<svg class="mico" style="top:176.2px" viewBox="0 0 64 64"><use href="#i_shell"/></svg>
<span class="mi" id="m4" style="left:48.20px;top:181.5px;letter-spacing:0.120px;">Shell</span>
<svg class="mico" style="top:218.0px" viewBox="0 0 64 64"><use href="#i_combine"/></svg>
<span class="mi" id="m5" style="left:48.20px;top:223.3px;letter-spacing:0.621px;">Combine</span>
<svg class="mico" style="top:260.1px" viewBox="0 0 64 64"><use href="#i_smooth"/></svg>
<span class="mi" id="m6" style="left:48.20px;top:265.4px;letter-spacing:0.460px;">Smooth</span>
<svg class="mico" style="top:301.9px" viewBox="0 0 64 64"><use href="#i_reverse"/></svg>
<span class="mi" id="m7" style="left:48.20px;top:307.2px;letter-spacing:0.329px;">Reverse Normal</span>
<div class="msep" style="top:340.0px"></div>
<svg class="mico" style="top:345.7px" viewBox="0 0 64 64"><use href="#i_separate"/></svg>
<span class="mi" id="m8" style="left:48.20px;top:351.0px;letter-spacing:-0.339px;">Separate</span>
<div class="msep" style="top:384.0px"></div>
<svg class="mico" style="top:390.3px" viewBox="0 0 64 64"><use href="#i_move"/></svg>
<span class="mi" id="m9" style="left:48.20px;top:395.6px;letter-spacing:0.945px;">Move/Copy</span>
<span class="sc" style="top:395.6px;left:253.4px;display:inline-block;transform:scaleX(1.17);transform-origin:left center">M</span>
<svg class="mico" style="top:432.1px" viewBox="0 0 64 64"><use href="#i_scale"/></svg>
<span class="mi" id="m10" style="left:48.20px;top:437.4px;letter-spacing:0.176px;">Scale Mesh</span>
<svg class="mico" style="top:474.2px" viewBox="0 0 64 64"><use href="#i_delete"/></svg>
<span class="mi" id="m11" style="left:48.20px;top:479.5px;letter-spacing:-0.060px;">Delete</span>
<svg class="abs" style="left:255.0px;top:481.0px" width="26" height="20" viewBox="0 0 26 20"><path d="M1.5 2.5H15L23 10L15 17.5H1.5Z" fill="none" stroke="#3b3b3b" stroke-width="1.6" stroke-linejoin="miter"/><path d="M6 6L13 14M13 6L6 14" stroke="#3b3b3b" stroke-width="1.6" fill="none"/></svg>
<svg class="mico" style="top:516.3px" viewBox="0 0 64 64"><use href="#i_remove"/></svg>
<span class="mi" id="m12" style="left:48.20px;top:521.6px;letter-spacing:0.080px;">Remove</span>
<div class="msep" style="top:554.0px"></div>
<div class="abs" style="left:8px;top:556.0px;width:332px;height:42px;background:#d9d9d9"></div>
<svg class="mico" style="top:559.8px" viewBox="0 0 64 64"><use href="#i_convert"/></svg>
<span class="mi" id="m13" style="left:48.20px;top:565.1px;letter-spacing:0.429px;">Convert Mesh</span>
<div class="abs" style="left:316.4px;top:566.4px;width:3.8px;height:3.8px;background:#111"></div>
<div class="abs" style="left:316.4px;top:576.0px;width:3.8px;height:3.8px;background:#111"></div>
<div class="abs" style="left:316.4px;top:585.6px;width:3.8px;height:3.8px;background:#111"></div>
<div class="msep" style="top:598.0px"></div>
<svg class="mico" style="top:603.9px" viewBox="0 0 64 64"><use href="#i_physmat"/></svg>
<span class="mi" id="m14" style="left:48.20px;top:609.2px;letter-spacing:0.207px;">Physical Material</span>
<svg class="mico" style="top:645.7px" viewBox="0 0 64 64"><use href="#i_appearance"/></svg>
<span class="mi" id="m15" style="left:48.20px;top:651.0px;letter-spacing:0.152px;">Appearance</span>
<span class="sc" style="top:651.0px;">A</span>
<svg class="mico" style="top:687.8px" viewBox="0 0 64 64"><use href="#i_lattice"/></svg>
<span class="mi" id="m16" style="left:48.20px;top:693.1px;letter-spacing:0.338px;">Volumetric Lattice</span>
<div class="msep" style="top:726.0px"></div>
<svg class="mico" style="top:731.6px" viewBox="0 0 64 64"><use href="#i_fx"/></svg>
<span class="mi" id="m17" style="left:48.20px;top:736.9px;letter-spacing:0.170px;">Change Parameters</span>
<svg class="mico" style="top:774.2px" viewBox="0 0 64 64"><use href="#i_compute"/></svg>
<span class="mi" id="m18" style="left:48.20px;top:779.5px;letter-spacing:0.680px;">Compute All</span>
<span class="sc" style="top:779.5px;">⌘B</span>
</div>
<div id="tooltip">
<span class="tl" id="tl0" style="left:32.00px;top:54.8px;letter-spacing:0.200px;">Converts a mesh body to a solid or surface</span>
<span class="tl" id="tl1" style="left:32.00px;top:86.8px;letter-spacing:0.825px;">body.</span>
<span class="tl" id="tl2" style="left:32.00px;top:150.8px;letter-spacing:0.424px;">Select the mesh body to convert, then select</span>
<span class="tl" id="tl3" style="left:32.00px;top:182.8px;letter-spacing:0.388px;">the operation and method. In the browser and</span>
<span class="tl" id="tl4" style="left:32.00px;top:214.8px;letter-spacing:0.270px;">the canvas, the mesh body converts to a solid</span>
<span class="tl" id="tl5" style="left:32.00px;top:246.8px;letter-spacing:0.200px;">or surface body. Face groups are used to infer</span>
<span class="tl" id="tl6" style="left:32.00px;top:278.8px;letter-spacing:0.583px;">prismatic features.</span>
<svg class="abs" style="left:0;top:0" width="672" height="776" viewBox="630 716 672 776">
<!--TIPIMG-->
<defs><linearGradient id="gY" gradientUnits="userSpaceOnUse" x1="730" y1="0" x2="875" y2="0"><stop offset="0" stop-color="#dbc37d"/><stop offset=".45" stop-color="#dfc881"/><stop offset="1" stop-color="#d1ba78"/></linearGradient><linearGradient id="gW" gradientUnits="userSpaceOnUse" x1="1041" y1="0" x2="1185" y2="0"><stop offset="0" stop-color="#d9d6cb"/><stop offset=".5" stop-color="#d6d3c7"/><stop offset="1" stop-color="#ceCABF"/></linearGradient></defs>
<path d="M802.6 1078.4L946.8 1160.8L875.3 1203.2L875.3 1203.2L868.7 1206.7L861.6 1209.8L854.0 1212.6L846.1 1214.9L837.8 1216.9L829.3 1218.5L820.5 1219.6L811.6 1220.2L802.7 1220.5L793.7 1220.2L784.8 1219.6L776.1 1218.5L767.5 1216.9L759.2 1214.9L751.3 1212.6L743.7 1209.8L736.6 1206.7L730.0 1203.2L658.4 1160.8Z" fill="#e8cf85"/>
<path d="M658.4 1160.8L730.0 1203.2L730.0 1370.7L658.4 1328.3Z" fill="#dbc37d"/>
<path d="M946.8 1160.8L875.3 1203.2L875.3 1370.7L946.8 1328.3Z" fill="#cfb876"/>
<path d="M730.0 1203.2L736.6 1206.7L743.7 1209.8L751.3 1212.6L759.2 1214.9L767.5 1216.9L776.1 1218.5L784.8 1219.6L793.7 1220.2L802.7 1220.5L811.6 1220.2L820.5 1219.6L829.3 1218.5L837.8 1216.9L846.1 1214.9L854.0 1212.6L861.6 1209.8L868.7 1206.7L875.3 1203.2L875.3 1370.7L868.7 1374.2L861.6 1377.3L854.0 1380.1L846.1 1382.4L837.8 1384.4L829.3 1386.0L820.5 1387.1L811.6 1387.7L802.7 1388.0L793.7 1387.7L784.8 1387.1L776.1 1386.0L767.5 1384.4L759.2 1382.4L751.3 1380.1L743.7 1377.3L736.6 1374.2L730.0 1370.7Z" fill="url(#gY)"/>
<path d="M730.5 1119.6L874.7 1119.6M730.5 1119.6L802.6 1161.5M874.7 1119.6L802.6 1161.5M658.4 1160.8L802.6 1161.5L946.8 1160.8M658.4 1244.8L730.0 1203.2M658.4 1244.8L730.0 1287.2M658.4 1328.3L730.0 1287.2M658.4 1160.8L730.0 1203.2M875.3 1287.2L946.8 1160.8M875.3 1287.2L946.8 1244.8M875.3 1370.7L946.8 1244.8M875.3 1203.2L946.8 1160.8M730.0 1287.2L736.6 1290.7L743.7 1293.8L751.3 1296.6L759.2 1298.9L767.5 1300.9L776.1 1302.5L784.8 1303.6L793.7 1304.2L802.7 1304.5L811.6 1304.2L820.5 1303.6L829.3 1302.5L837.8 1300.9L846.1 1298.9L854.0 1296.6L861.6 1293.8L868.7 1290.7L875.3 1287.2" fill="none" stroke="#8a6d20" stroke-opacity=".32" stroke-width=".8"/>
<path d="M802.6 1161.5L730.0 1203.2M802.6 1161.5L736.6 1206.7M802.6 1161.5L743.7 1209.8M802.6 1161.5L751.3 1212.6M802.6 1161.5L759.2 1214.9M802.6 1161.5L767.5 1216.9M802.6 1161.5L776.1 1218.5M802.6 1161.5L784.8 1219.6M802.6 1161.5L793.7 1220.2M802.6 1161.5L802.7 1220.5M802.6 1161.5L811.6 1220.2M802.6 1161.5L820.5 1219.6M802.6 1161.5L829.3 1218.5M802.6 1161.5L837.8 1216.9M802.6 1161.5L846.1 1214.9M802.6 1161.5L854.0 1212.6M802.6 1161.5L861.6 1209.8M802.6 1161.5L868.7 1206.7M802.6 1161.5L875.3 1203.2" fill="none" stroke="#8a6d20" stroke-opacity=".28" stroke-width=".6"/>
<path d="M730.0 1203.2L730.0 1370.7M730.0 1287.2L736.6 1206.7M730.0 1370.7L736.6 1290.7M736.6 1206.7L736.6 1374.2M736.6 1290.7L743.7 1209.8M736.6 1374.2L743.7 1293.8M743.7 1209.8L743.7 1377.3M743.7 1293.8L751.3 1212.6M743.7 1377.3L751.3 1296.6M751.3 1212.6L751.3 1380.1M751.3 1296.6L759.2 1214.9M751.3 1380.1L759.2 1298.9M759.2 1214.9L759.2 1382.4M759.2 1298.9L767.5 1216.9M759.2 1382.4L767.5 1300.9M767.5 1216.9L767.5 1384.4M767.5 1300.9L776.1 1218.5M767.5 1384.4L776.1 1302.5M776.1 1218.5L776.1 1386.0M776.1 1302.5L784.8 1219.6M776.1 1386.0L784.8 1303.6M784.8 1219.6L784.8 1387.1M784.8 1303.6L793.7 1220.2M784.8 1387.1L793.7 1304.2M793.7 1220.2L793.7 1387.7M793.7 1304.2L802.7 1220.5M793.7 1387.7L802.7 1304.5M802.7 1220.5L802.7 1388.0M802.7 1304.5L811.6 1220.2M802.7 1388.0L811.6 1304.2M811.6 1220.2L811.6 1387.7M811.6 1304.2L820.5 1219.6M811.6 1387.7L820.5 1303.6M820.5 1219.6L820.5 1387.1M820.5 1303.6L829.3 1218.5M820.5 1387.1L829.3 1302.5M829.3 1218.5L829.3 1386.0M829.3 1302.5L837.8 1216.9M829.3 1386.0L837.8 1300.9M837.8 1216.9L837.8 1384.4M837.8 1300.9L846.1 1214.9M837.8 1384.4L846.1 1298.9M846.1 1214.9L846.1 1382.4M846.1 1298.9L854.0 1212.6M846.1 1382.4L854.0 1296.6M854.0 1212.6L854.0 1380.1M854.0 1296.6L861.6 1209.8M854.0 1380.1L861.6 1293.8M861.6 1209.8L861.6 1377.3M861.6 1293.8L868.7 1206.7M861.6 1377.3L868.7 1290.7M868.7 1206.7L868.7 1374.2M868.7 1290.7L875.3 1203.2M868.7 1374.2L875.3 1287.2M875.3 1203.2L875.3 1370.7" fill="none" stroke="#8a6d20" stroke-opacity=".30" stroke-width=".6"/>
<path d="M730.0 1203.2L736.6 1206.7L743.7 1209.8L751.3 1212.6L759.2 1214.9L767.5 1216.9L776.1 1218.5L784.8 1219.6L793.7 1220.2L802.7 1220.5L811.6 1220.2L820.5 1219.6L829.3 1218.5L837.8 1216.9L846.1 1214.9L854.0 1212.6L861.6 1209.8L868.7 1206.7L875.3 1203.2" fill="none" stroke="#8a6d20" stroke-opacity=".3" stroke-width=".8"/>
<circle cx="802.6" cy="1160.0" r="1.6" fill="#6b5518" fill-opacity=".7"/>
<path d="M1113.7 1140.2L1256.4 1223.0L1185.3 1264.2L1185.3 1264.2L1180.4 1266.8L1175.2 1269.3L1169.8 1271.5L1164.1 1273.5L1158.2 1275.4L1152.1 1277.0L1145.8 1278.3L1139.4 1279.4L1132.9 1280.3L1126.3 1280.9L1119.7 1281.3L1113.0 1281.4L1106.3 1281.3L1099.7 1280.9L1093.1 1280.3L1086.6 1279.4L1080.3 1278.3L1074.0 1277.0L1068.0 1275.4L1062.1 1273.5L1056.5 1271.5L1051.1 1269.3L1045.9 1266.8L1041.1 1264.2L970.6 1223.0Z" fill="#e0dcd0"/>
<path d="M970.6 1223.0L1041.1 1264.2L1041.1 1430.1L970.6 1388.9Z" fill="#d8d5ca"/>
<path d="M1256.4 1223.0L1185.3 1264.2L1185.3 1430.1L1256.4 1388.9Z" fill="#cdc9be"/>
<path d="M1041.1 1264.2L1045.9 1266.8L1051.1 1269.3L1056.5 1271.5L1062.1 1273.5L1068.0 1275.4L1074.0 1277.0L1080.3 1278.3L1086.6 1279.4L1093.1 1280.3L1099.7 1280.9L1106.3 1281.3L1113.0 1281.4L1119.7 1281.3L1126.3 1280.9L1132.9 1280.3L1139.4 1279.4L1145.8 1278.3L1152.1 1277.0L1158.2 1275.4L1164.1 1273.5L1169.8 1271.5L1175.2 1269.3L1180.4 1266.8L1185.3 1264.2L1185.3 1430.1L1180.4 1432.7L1175.2 1435.2L1169.8 1437.4L1164.1 1439.4L1158.2 1441.3L1152.1 1442.9L1145.8 1444.2L1139.4 1445.3L1132.9 1446.2L1126.3 1446.8L1119.7 1447.2L1113.0 1447.3L1106.3 1447.2L1099.7 1446.8L1093.1 1446.2L1086.6 1445.3L1080.3 1444.2L1074.0 1442.9L1068.0 1441.3L1062.1 1439.4L1056.5 1437.4L1051.1 1435.2L1045.9 1432.7L1041.1 1430.1Z" fill="url(#gW)"/>
<path d="M970.6 1223.0L1041.1 1264.2L1045.9 1266.8L1051.1 1269.3L1056.5 1271.5L1062.1 1273.5L1068.0 1275.4L1074.0 1277.0L1080.3 1278.3L1086.6 1279.4L1093.1 1280.3L1099.7 1280.9L1106.3 1281.3L1113.0 1281.4L1119.7 1281.3L1126.3 1280.9L1132.9 1280.3L1139.4 1279.4L1145.8 1278.3L1152.1 1277.0L1158.2 1275.4L1164.1 1273.5L1169.8 1271.5L1175.2 1269.3L1180.4 1266.8L1185.3 1264.2L1256.4 1223.0M1041.1 1264.2L1041.1 1430.1M1185.3 1264.2L1185.3 1430.1" fill="none" stroke="#77776f" stroke-width=".9"/>
</svg>
</div>

</body></html>
